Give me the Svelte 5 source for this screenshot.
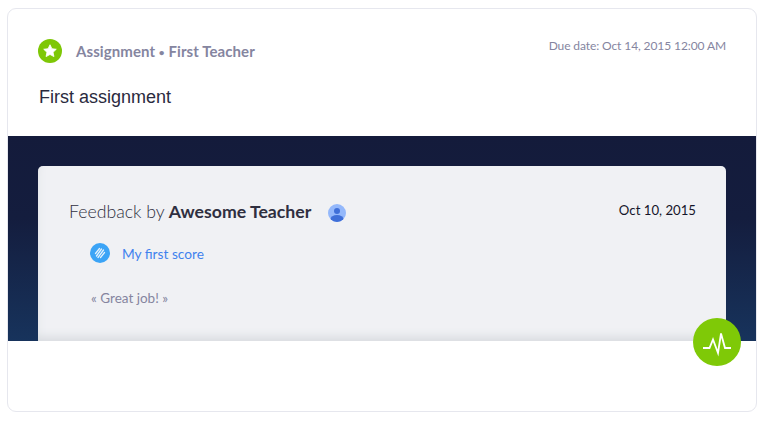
<script lang="ts">
  const assignment = {
    kind: 'Assignment',
    teacher: 'First Teacher',
    due: 'Due date: Oct 14, 2015 12:00 AM',
    title: 'First assignment'
  };
</script>

<div class="page">
  <div class="card">
    <header class="head">
      <div class="meta">
        <span class="badge">
          <svg viewBox="0 0 24 24" width="16" height="16"><path d="M12 2.600l2.900 6 6.500.8-4.800 4.500 1.300 6.500L12 17.200l-5.900 3.200 1.300-6.500L2.600 9.400l6.500-.8z" fill="#fff" stroke="#fff" stroke-width="1.200" stroke-linejoin="round"/></svg>
        </span>
        <span class="course">{assignment.kind} <span class="dot">•</span> {assignment.teacher}</span>
        <span class="due">{assignment.due}</span>
      </div>
      <h1>{assignment.title}</h1>
    </header>

    <section class="band">
      <div class="feedback">
        <div class="fb-head">
          <div class="by">
            <span>Feedback by</span>
            <strong>Awesome Teacher</strong>
            <span class="avatar">
              <svg viewBox="0 0 18 18" width="18" height="18">
                <circle cx="9" cy="7" r="3" fill="#3f6fd8"/>
                <ellipse cx="9" cy="15" rx="6.500" ry="4" fill="#3f6fd8"/>
              </svg>
            </span>
          </div>
          <span class="date">Oct 10, 2015</span>
        </div>
        <div class="score">
          <span class="score-icon">
            <svg viewBox="0 0 20 20" width="20" height="20">
              <path d="M5.500 10.500L9.500 5.500M6.500 13L11.500 6M8 14.500L13.500 7M10.500 14.500L14.500 9.500" stroke="#fff" stroke-width="1.300" stroke-linecap="round" opacity="0.850"/>
            </svg>
          </span>
          <span class="score-link">My first score</span>
        </div>
        <p class="quote">« Great job! »</p>
      </div>
    </section>

    <div class="fab">
      <svg viewBox="0 0 48 48" width="48" height="48">
        <path d="M10 30h6.500L20 21.500 25 35l3-19.500L32 30h6" fill="none" stroke="#fff" stroke-width="1.800"/>
      </svg>
    </div>
  </div>
</div>

<style>
  :global(body) {
    background: #fff;
  }

  .page {
    width: 765px;
    height: 421px;
    padding: 8px 8px 9px 7px;
    box-sizing: border-box;
  }

  .card {
    position: relative;
    height: 100%;
    box-sizing: border-box;
    border: 1px solid #e6e7ee;
    border-radius: 9px;
    background: #fff;
  }

  .head {
    height: 127px;
    box-sizing: border-box;
    padding: 30px 30px 0 30px;
  }

  .meta {
    display: flex;
    align-items: center;
    height: 24px;
  }

  .badge {
    width: 24px;
    height: 24px;
    border-radius: 50%;
    background: #7ec706;
    display: flex;
    align-items: center;
    justify-content: center;
    margin-right: 14px;
  }

  .course {
    font-family: Lato, sans-serif;
    font-weight: 700;
    font-size: 15px;
    letter-spacing: 0.08px;
    color: #85859f;
    margin-top: -1px;
  }

  .dot {
    font-size: 10px;
    vertical-align: 1px;
  }

  .due {
    margin-left: auto;
    margin-top: -12px;
    font-family: Lato, sans-serif;
    font-size: 12px;
    letter-spacing: -0.1px;
    color: #85859f;
  }

  h1 {
    margin: 23px 0 0 1px;
    font-family: "Liberation Sans", sans-serif;
    font-weight: 400;
    font-size: 18px;
    line-height: 22px;
    color: #2a2a3e;
  }

  .band {
    height: 205px;
    box-sizing: border-box;
    padding: 30px 30px 0;
    background: linear-gradient(180deg, #141b3b 0%, #141d3e 40%, #17335c 100%);
    overflow: hidden;
  }

  .feedback {
    height: 175px;
    box-sizing: border-box;
    padding: 35px 30px 0 31px;
    border-radius: 5px 5px 0 0;
    background: #f0f1f4;
    box-shadow: inset 0 -12px 10px -8px #d8dbdf, inset 8px 0 8px -8px #e2e4e8;
  }

  .fb-head {
    display: flex;
    justify-content: space-between;
    align-items: flex-start;
    height: 23px;
  }

  .by {
    display: flex;
    align-items: center;
    gap: 4px;
    font-family: Lato, sans-serif;
    font-size: 17.700px;
    font-weight: 300;
    color: #2f2f40;
  }

  .by strong {
    font-weight: 700;
  }

  .avatar {
    width: 18px;
    height: 18px;
    margin: 2px 0 0 13px;
    border-radius: 50%;
    background: #94b8fb;
    overflow: hidden;
  }

  .avatar svg {
    display: block;
  }

  .date {
    font-family: Lato, sans-serif;
    font-size: 13.200px;
    line-height: 18px;
    color: #15152a;
  }

  .score {
    display: flex;
    align-items: center;
    margin: 19px 0 0 21px;
    height: 20px;
  }

  .score-icon {
    width: 20px;
    height: 20px;
    border-radius: 50%;
    background: #3ba4f6;
    margin-right: 12px;
  }

  .score-icon svg {
    display: block;
  }

  .score-link {
    font-family: Lato, sans-serif;
    font-size: 13.700px;
    color: #3f82ee;
  }

  .quote {
    margin: 27px 0 0 22px;
    font-family: Lato, sans-serif;
    font-size: 13.500px;
    line-height: 16px;
    color: #85859f;
  }

  .fab {
    position: absolute;
    left: 685px;
    top: 309px;
    width: 48px;
    height: 48px;
    border-radius: 50%;
    background: #7fc907;
  }

  .fab svg {
    display: block;
  }
</style>
